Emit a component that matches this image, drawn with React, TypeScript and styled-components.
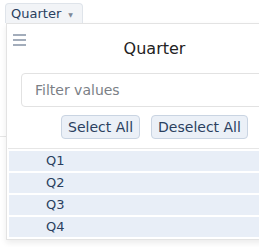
import { FC } from "react";
import styled, { createGlobalStyle } from "styled-components";

const GlobalStyle = createGlobalStyle`
	html, body {
		margin: 0;
		padding: 0;
		background: #fff;
		overflow: hidden;
	}
	body {
		font-family: "DejaVu Sans", Verdana, sans-serif;
		color: #2a3f5f;
	}
`;

const Page = styled.div`
	position: relative;
	width: 259px;
	height: 247px;
	padding: 3px 0 0 5px;
	box-sizing: border-box;
	overflow: hidden;
`;

const AttrTag = styled.span`
	position: relative;
	z-index: 2;
	display: inline-flex;
	align-items: center;
	gap: 7px;
	height: 20px;
	padding: 0 9px 0 5px;
	box-sizing: border-box;
	background: #f2f4f7;
	border: 1px solid #dfe4ea;
	border-bottom: none;
	border-radius: 4px 4px 0 0;
	font-size: 13px;
	color: #2a3f5f;
`;

const Caret = styled.span`
	font-size: 6px;
	color: #7d8796;
	margin-top: 2px;
`;

const Backdrop = styled.div`
	height: 113px;
	border-bottom: 1px solid #e6e6e6;
	margin-left: -5px;
`;

const FilterBox = styled.div`
	position: absolute;
	z-index: 1;
	top: 23px;
	left: 6px;
	width: 296px;
	background: #fff;
	border: 1px solid #e3e3e3;
	box-shadow: 0 3px 6px rgba(0, 0, 0, 0.08);
	padding: 0 0 1px 1px;
	box-sizing: border-box;
`;

const Header = styled.div`
	position: relative;
	padding-top: 15px;
	display: flex;
	justify-content: center;
`;

const Handle = styled.svg`
	position: absolute;
	left: 5px;
	top: 10px;
`;

const Title = styled.h4`
	margin: 0;
	font-size: 16px;
	font-weight: normal;
	color: #222;
	line-height: 19px;
`;

const FilterInput = styled.input`
	display: block;
	margin: 15px 13px 0;
	width: 268px;
	height: 34px;
	box-sizing: border-box;
	border: 1px solid #e2e2e2;
	border-radius: 4px;
	padding: 0 13px;
	font-family: "DejaVu Sans", Verdana, sans-serif;
	font-size: 14px;
	color: #2a3f5f;
	outline: none;

	&::placeholder {
		color: #7b7f86;
	}
`;

const ButtonRow = styled.div`
	display: flex;
	justify-content: center;
	gap: 11px;
	margin-top: 8px;
	padding-bottom: 9px;
	border-bottom: 1px solid #e6e6e6;
`;

const Button = styled.button`
	height: 24px;
	padding: 0 6px;
	background: #ebf0f7;
	border: 1px solid #c9d4e2;
	border-radius: 4px;
	font-family: "DejaVu Sans", Verdana, sans-serif;
	font-size: 14px;
	color: #2a3f5f;
`;

const ValueList = styled.div`
	display: flex;
	flex-direction: column;
	gap: 2px;
	padding: 2px 0 1px 1px;
`;

const ValueRow = styled.p`
	margin: 0;
	height: 20px;
	line-height: 20px;
	padding-left: 37px;
	background: #e8eef7;
	font-size: 13px;
	color: #2a3f5f;
`;

const quarters = ["Q1", "Q2", "Q3", "Q4"];

const App: FC = () => {
	return (
		<>
			<GlobalStyle />
			<Page>
				<AttrTag>
					Quarter <Caret>▼</Caret>
				</AttrTag>
				<Backdrop />
				<FilterBox>
					<Header>
						<Handle width="13" height="12" viewBox="0 0 13 12">
							<rect x="0" y="0" width="13" height="2" fill="#a3adbb" />
							<rect x="0" y="5" width="13" height="2" fill="#a3adbb" />
							<rect x="0" y="10" width="13" height="2" fill="#a3adbb" />
						</Handle>
						<Title>Quarter</Title>
					</Header>
					<FilterInput placeholder="Filter values" />
					<ButtonRow>
						<Button>Select All</Button>
						<Button>Deselect All</Button>
					</ButtonRow>
					<ValueList>
						{quarters.map((q) => (
							<ValueRow key={q}>{q}</ValueRow>
						))}
					</ValueList>
				</FilterBox>
			</Page>
		</>
	);
};

export default App;
